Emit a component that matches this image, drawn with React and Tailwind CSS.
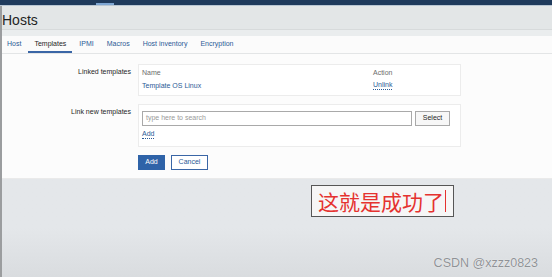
const tabs = ['Host', 'Templates', 'IPMI', 'Macros', 'Host inventory', 'Encryption'];

function FieldRow({ label, children }) {
  return (
    <div className="flex gap-[7px]">
      <div className="w-[129px] shrink-0 text-right text-[7px] leading-[9px] pt-[3px] text-[#1f1f1f]">{label}</div>
      {children}
    </div>
  );
}

export default function App() {
  return (
    <div className="w-[552px] h-[277px] overflow-hidden flex flex-col bg-[#e3e6e9] font-['Liberation_Sans',Arial,sans-serif]">
      {/* top nav */}
      <div className="h-[5px] shrink-0 bg-[#1f3a5c] flex items-end">
        <div className="ml-[96px] w-[18px] h-[2px] bg-[#7ea6d3]" />
      </div>
      <div className="h-[1px] shrink-0 bg-[#b9c6d3]" />

      <div className="flex-1 flex min-h-0">
        <div className="w-[2px] shrink-0 bg-[#9b9d9f]" />
        <div className="flex-1 flex flex-col min-w-0">
          {/* page title */}
          <div className="h-[24px] shrink-0 bg-[#e3e6e7] border-b border-[#d7dadb] flex items-center">
            <h1 className="text-[14px] leading-none text-[#1f1f1f] pt-[4px]">Hosts</h1>
          </div>
          <div className="h-[6px] shrink-0 bg-[#eaedee]" />

          {/* tabs */}
          <div className="h-[18px] shrink-0 bg-[#fbfbfb] border-b border-[#e3e5e6] flex gap-[11px] pl-[4px]">
            {tabs.map((t) => (
              <div
                key={t}
                className={`text-[7px] leading-[9px] flex items-center ${
                  t === 'Templates'
                    ? 'text-[#1f1f1f] border-b-2 border-[#3a66a6] -mx-[5px] px-[6px]'
                    : 'text-[#2b5a96] border-b-2 border-transparent px-[1px]'
                }`}
              >
                {t}
              </div>
            ))}
          </div>

          {/* form */}
          <div className="h-[125px] shrink-0 bg-[#fcfcfc] border-b border-[#eaeaea] pt-[10px] flex flex-col gap-[8px]">
            <FieldRow label="Linked templates">
              <div className="w-[323px] h-[32px] border border-[#ececec] bg-white flex px-[3px] pt-[3px] text-[7px] leading-[9px]">
                <div className="w-[231px] flex flex-col gap-[4px]">
                  <span className="text-[#6b6b6b]">Name</span>
                  <span className="text-[#2b5a96]">Template OS Linux</span>
                </div>
                <div className="flex flex-col gap-[4px]">
                  <span className="text-[#6b6b6b]">Action</span>
                  <span className="text-[#2b5a96] border-b border-dotted border-[#2b5a96] self-start leading-[8px]">Unlink</span>
                </div>
              </div>
            </FieldRow>
            <FieldRow label="Link new templates">
              <div className="w-[323px] h-[43px] border border-[#ececec] bg-white px-[3px] pt-[6px] flex flex-col gap-[4px]">
                <div className="flex gap-[3px]">
                  <div className="w-[270px] h-[15px] border border-[#a9a9a9] bg-white flex items-center px-[3px] text-[7px] text-[#9a9a9a]">
                    type here to search
                  </div>
                  <div className="w-[35px] h-[15px] border border-[#a9a9a9] bg-[#f7f7f7] flex items-center justify-center text-[7px] text-[#1f1f1f]">
                    Select
                  </div>
                </div>
                <span className="text-[7px] leading-[8px] text-[#2b5a96] border-b border-dotted border-[#2b5a96] self-start">Add</span>
              </div>
            </FieldRow>
            <div className="flex gap-[6px] pl-[136px]">
              <div className="w-[27px] h-[15px] bg-[#2f63a8] border border-[#2f63a8] text-white text-[7px] flex items-center justify-center">Add</div>
              <div className="w-[37px] h-[15px] bg-white border border-[#3a66a6] text-[#2b5a96] text-[7px] flex items-center justify-center">Cancel</div>
            </div>
          </div>

          {/* lower area */}
          <div className="flex-1 flex flex-col bg-gradient-to-b from-[#e4e7ea] via-[#e4e7ea] to-[#d9dcdf]">
            <div className="pl-[309px] pt-[6px]">
              <div className="w-[143px] h-[32px] border border-[#565656] bg-[#f6f6f6] flex items-center pl-[6px] gap-[1px]">
                <span className="text-[21px] leading-none text-[#e5322f] font-['Noto_Sans_CJK_SC',sans-serif]">这就是成功了</span>
                <span className="w-[1px] h-[22px] bg-[#e5322f]" />
              </div>
            </div>
            <div className="flex-1 flex items-end justify-end pr-[14px] pb-[8px]">
              <span className="text-[12.5px] leading-none text-[#8f9296] [text-shadow:0_0_1px_#ffffff]">CSDN @xzzz0823</span>
            </div>
          </div>
        </div>
      </div>
    </div>
  );
}
